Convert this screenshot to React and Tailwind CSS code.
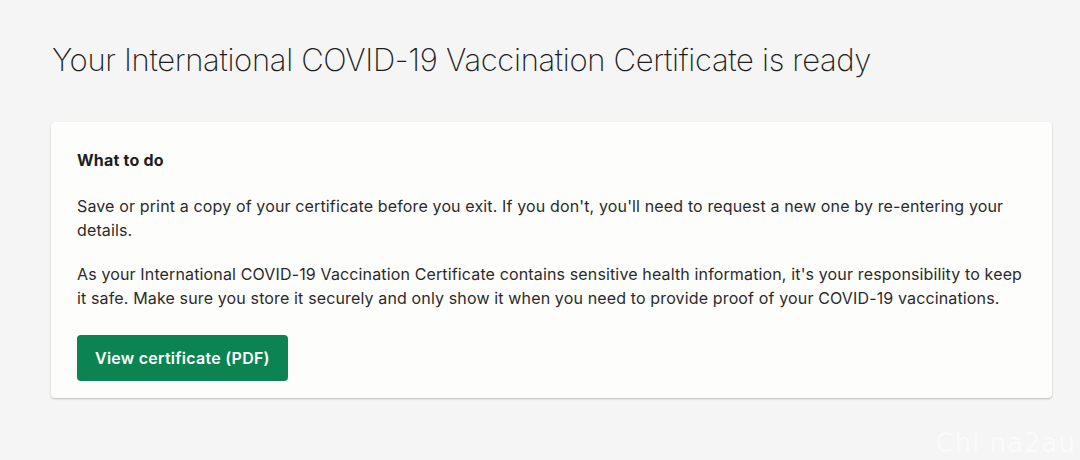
import React from 'react';

const App = () => {
  return (
    <div className="min-h-[460px] w-full bg-[#f4f5f4] font-['Inter',sans-serif] text-[#1e1e1e] relative overflow-hidden">
      <div className="px-[51px] pt-[40px]">
        <h1 className="text-[31px] font-extralight leading-[40px] tracking-[-0.32px] text-[#1d1d1d] pl-px">
          Your International COVID-19 Vaccination Certificate is ready
        </h1>

        {/* Card */}
        <div className="mt-[42px] w-[1001px] bg-[#fdfdfc] rounded-[4px] shadow-[0_1px_2px_rgba(0,0,0,0.25)] px-[26px] pt-[27px] pb-[17px]">
          <h2 className="text-[16px] font-bold leading-[22px] tracking-[0.2px] text-[#1e1e1e]">What to do</h2>
          <p className="mt-[23px] text-[16px] leading-[24px] tracking-[0.14px] text-[#2b2b2b]">
            Save or print a copy of your certificate before you exit. If you don't, you'll need to request a new one by re-entering your details.
          </p>
          <p className="mt-[20px] text-[16px] leading-[24px] tracking-[0.14px] text-[#2b2b2b]">
            As your International COVID-19 Vaccination Certificate contains sensitive health information, it's your responsibility to keep it safe. Make sure you store it securely and only show it when you need to provide proof of your COVID-19 vaccinations.
          </p>
          <button className="mt-[25px] h-[46px] px-[18px] rounded-[4px] bg-[#0b8451] text-white text-[16px] font-semibold tracking-[0.25px]">
            View certificate (PDF)
          </button>
        </div>
      </div>

      <div className="absolute right-[4px] bottom-[2px] text-[26px] leading-[30px] text-white/50 font-['DejaVu_Sans',sans-serif] tracking-[1px]">
        Chi na2au
      </div>
    </div>
  );
};

export default App;
